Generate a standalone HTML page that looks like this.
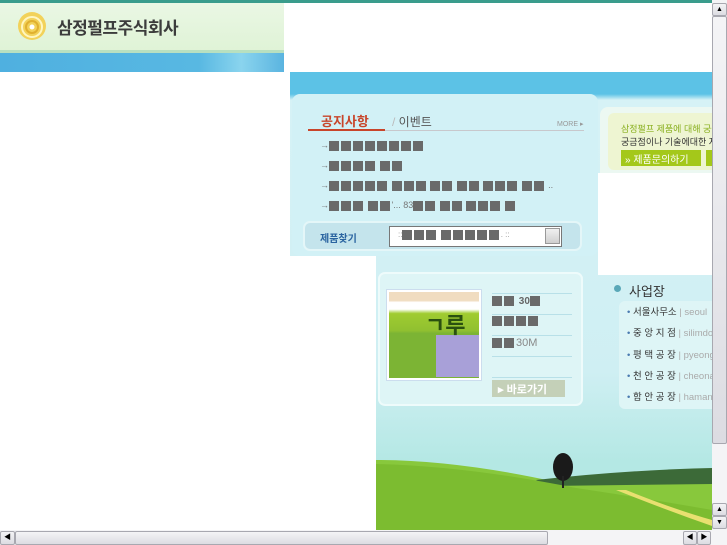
<!DOCTYPE html>
<html><head><meta charset="utf-8"><style>
*{margin:0;padding:0;box-sizing:border-box}
body{width:727px;height:545px;overflow:hidden;position:relative;background:#fff;font-family:"Liberation Sans","Noto Sans CJK KR",sans-serif}
.a{position:absolute}
.blk{display:inline-block;width:10px;height:10px;background:#6a6a6a;margin-right:2px;vertical-align:middle}
.sb{background:linear-gradient(#f4f4f6,#dcdce2);border:1px solid #a8a8b0;border-radius:2px}
</style></head><body>
<div class="a" style="left:0;top:0;width:727px;height:3px;background:#3a9c8c"></div>
<div class="a" style="left:0;top:3px;width:284px;height:49px;background:linear-gradient(#eaf7e4,#dff3d6)"></div>
<div class="a" style="left:0;top:50px;width:284px;height:3px;background:#b8e0c0"></div>
<div class="a" style="left:0;top:53px;width:284px;height:19px;background:linear-gradient(90deg,#4fb0e0,#58b8e2 70%,#8ad4ee 85%,#5ab4e0)"></div>
<svg class="a" style="left:16px;top:10px" width="32" height="32" viewBox="0 0 32 32"><circle cx="16" cy="16" r="14" fill="#f2d25a"/><circle cx="16" cy="17" r="10" fill="none" stroke="#fff6c0" stroke-width="2"/><circle cx="16" cy="17" r="6" fill="none" stroke="#e0b030" stroke-width="2"/><circle cx="16" cy="17" r="2.5" fill="#fff"/></svg>
<div class="a" style="left:57px;top:14px;font-size:17px;font-weight:bold;color:#3c3c3c;letter-spacing:-0.5px">삼정펄프주식회사</div>

<div class="a" style="left:290px;top:72px;width:422px;height:458px;background:linear-gradient(#5cc2e6 0,#5cc2e6 22px,#d6f2f6 28px,#cfeff3 300px,#b4e8e4 390px)"></div>
<div class="a" style="left:292px;top:94px;width:306px;height:162px;background:#d2f1f6;border-radius:8px"></div>
<div class="a" style="left:321px;top:111px;font-size:13px;color:#c8452a;font-weight:bold">공지사항</div>
<div class="a" style="left:392px;top:113px;font-size:12px;color:#555"><span style="color:#bbb">/</span> 이벤트</div>
<div class="a" style="left:557px;top:120px;font-size:7px;color:#999">MORE ▸</div>
<div class="a" style="left:308px;top:129px;width:77px;height:2px;background:#c8452a"></div>
<div class="a" style="left:385px;top:130px;width:199px;height:1px;background:#c8c8cc"></div>
<div class="a" style="left:320px;top:135px;font-size:9px;color:#777;line-height:20px">
<div>→<span class="blk"></span><span class="blk"></span><span class="blk"></span><span class="blk"></span><span class="blk"></span><span class="blk"></span><span class="blk"></span><span class="blk"></span></div>
<div>→<span class="blk"></span><span class="blk"></span><span class="blk"></span><span class="blk"></span> <span class="blk"></span><span class="blk"></span></div>
<div>→<span class="blk"></span><span class="blk"></span><span class="blk"></span><span class="blk"></span><span class="blk"></span> <span class="blk"></span><span class="blk"></span><span class="blk"></span> <span class="blk"></span><span class="blk"></span> <span class="blk"></span><span class="blk"></span> <span class="blk"></span><span class="blk"></span><span class="blk"></span> <span class="blk"></span><span class="blk"></span> ..</div>
<div>→<span class="blk"></span><span class="blk"></span><span class="blk"></span> <span class="blk"></span><span class="blk"></span>'... 83<span class="blk"></span><span class="blk"></span> <span class="blk"></span><span class="blk"></span> <span class="blk"></span><span class="blk"></span><span class="blk"></span> <span class="blk"></span></div>
</div>
<div class="a" style="left:303px;top:221px;width:279px;height:30px;background:#c4e4ec;border:2px solid #e4f6f8;border-radius:7px"></div>
<div class="a" style="left:320px;top:230px;font-size:10px;color:#2a64a0;font-weight:bold">제품찾기</div>
<div class="a" style="left:389px;top:226px;width:173px;height:21px;background:#fff;border:1px solid #777;font-size:8px;color:#999;padding:3px 0 0 8px">::<span class="blk"></span><span class="blk"></span><span class="blk"></span> <span class="blk"></span><span class="blk"></span><span class="blk"></span><span class="blk"></span><span class="blk"></span>. ::</div>
<div class="a" style="left:545px;top:228px;width:15px;height:16px;background:linear-gradient(#f0f0f0,#cfcfcf);border:1px solid #999"></div>

<div class="a" style="left:600px;top:107px;width:112px;height:66px;background:#ecf8f2;border-radius:8px 0 0 0"></div>
<div class="a" style="left:608px;top:113px;width:104px;height:57px;background:#eef5d2;border-radius:6px 0 0 6px"></div>
<div class="a" style="left:621px;top:122px;font-size:9px;color:#8ab020;white-space:nowrap">삼정펄프 제품에 대해 궁금</div>
<div class="a" style="left:621px;top:135px;font-size:9px;color:#333;white-space:nowrap">궁금점이나 기술에대한 자료</div>
<div class="a" style="left:621px;top:150px;width:80px;height:16px;background:#a4c81a;color:#fff;font-size:10px;padding:1px 0 0 4px">» 제품문의하기</div>
<div class="a" style="left:706px;top:150px;width:6px;height:16px;background:#a4c81a"></div>
<div class="a" style="left:598px;top:173px;width:114px;height:102px;background:#fff"></div>
<div class="a" style="left:290px;top:256px;width:86px;height:274px;background:#fff"></div>

<div class="a" style="left:378px;top:272px;width:205px;height:134px;background:#def5f6;border:2px solid #eefbfb;border-radius:7px"></div>
<div class="a" style="left:386px;top:289px;width:96px;height:92px;background:#fff;border:1px solid #cde"></div>
<div class="a" style="left:389px;top:292px;width:90px;height:86px;background:linear-gradient(#f0dcc0 0,#f0dcc0 10%,#fff 12%,#fff 20%,#a0cc30 25%,#90c030 45%,#7cb434 48%,#7cb434 100%)"></div>
<div class="a" style="left:436px;top:335px;width:43px;height:42px;background:#a8a0d8"></div>
<div class="a" style="left:425px;top:308px;font-size:22px;font-weight:bold;color:#2a5010">ㄱ루</div>
<div class="a" style="left:492px;top:293px;width:80px;height:1px;background:#b8e0e8"></div>
<div class="a" style="left:492px;top:314px;width:80px;height:1px;background:#b8e0e8"></div>
<div class="a" style="left:492px;top:335px;width:80px;height:1px;background:#b8e0e8"></div>
<div class="a" style="left:492px;top:356px;width:80px;height:1px;background:#b8e0e8"></div>
<div class="a" style="left:492px;top:377px;width:80px;height:1px;background:#b8e0e8"></div>
<div class="a" style="left:492px;top:296px;font-size:10px;color:#666;font-weight:bold"><span class="blk"></span><span class="blk"></span> 30<span class="blk"></span></div>
<div class="a" style="left:492px;top:316px;font-size:10px"><span class="blk"></span><span class="blk"></span><span class="blk"></span><span class="blk"></span></div>
<div class="a" style="left:492px;top:337px;font-size:11px;color:#888"><span class="blk"></span><span class="blk"></span>30M</div>
<div class="a" style="left:492px;top:380px;width:73px;height:17px;background:#c4d0b8;color:#fff;font-size:11px;font-weight:bold;padding:1px 0 0 6px">▸ 바로가기</div>

<div class="a" style="left:614px;top:285px;width:7px;height:7px;border-radius:50%;background:#5aa8b8"></div>
<div class="a" style="left:629px;top:281px;font-size:13px;color:#333">사업장</div>
<div class="a" style="left:619px;top:301px;width:93px;height:108px;background:#def5f6;border-radius:6px 0 0 6px"></div>
<div class="a" style="left:627px;top:302px;font-size:9.5px;color:#333;line-height:21.3px;white-space:nowrap">
<div><span style="color:#4a7ab0">•</span> 서울사무소 <span style="color:#aaa">| seoul</span></div>
<div><span style="color:#4a7ab0">•</span> 중 앙 지 점 <span style="color:#aaa">| silimdo</span></div>
<div><span style="color:#4a7ab0">•</span> 평 택 공 장 <span style="color:#aaa">| pyeong</span></div>
<div><span style="color:#4a7ab0">•</span> 천 안 공 장 <span style="color:#aaa">| cheona</span></div>
<div><span style="color:#4a7ab0">•</span> 함 안 공 장 <span style="color:#aaa">| haman</span></div>
</div>

<svg class="a" style="left:376px;top:440px" width="336" height="90" viewBox="0 0 336 90">
<path d="M0 20 Q80 20 180 42 L336 40 L336 90 L0 90Z" fill="#88c83c"/>
<path d="M160 40 Q250 30 336 28 L336 44 L170 46Z" fill="#3c6a38"/>
<path d="M0 24 Q90 26 200 48 Q280 60 336 70 L336 90 L0 90Z" fill="#7cbc30"/>
<path d="M250 50 Q300 70 336 80 L336 86 Q290 70 240 50Z" fill="#e8e070"/>
<ellipse cx="187" cy="27" rx="10" ry="14" fill="#1a1a1a"/><rect x="186" y="36" width="2" height="12" fill="#222"/>
</svg>

<div class="a" style="left:712px;top:0;width:15px;height:530px;background:#f4f4f6"></div>
<div class="a sb" style="left:712px;top:3px;width:15px;height:13px;font-size:7px;text-align:center;line-height:11px">▲</div>
<div class="a sb" style="left:712px;top:16px;width:15px;height:428px"></div>
<div class="a sb" style="left:712px;top:503px;width:15px;height:13px;font-size:7px;text-align:center;line-height:11px">▲</div>
<div class="a sb" style="left:712px;top:516px;width:15px;height:13px;font-size:7px;text-align:center;line-height:11px">▼</div>
<div class="a" style="left:0;top:530px;width:727px;height:15px;background:#f4f4f6"></div>
<div class="a sb" style="left:0;top:531px;width:15px;height:14px;font-size:7px;text-align:center;line-height:12px">◀</div>
<div class="a sb" style="left:15px;top:531px;width:533px;height:14px"></div>
<div class="a sb" style="left:683px;top:531px;width:14px;height:14px;font-size:7px;text-align:center;line-height:12px">◀</div>
<div class="a sb" style="left:697px;top:531px;width:14px;height:14px;font-size:7px;text-align:center;line-height:12px">▶</div>
</body></html>
